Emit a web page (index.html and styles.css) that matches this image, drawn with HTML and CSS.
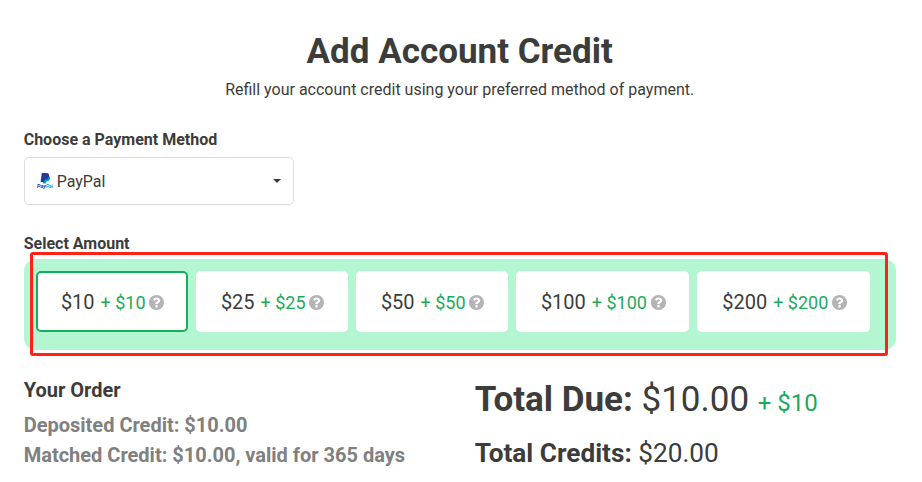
FILE: index.html
```html
<!DOCTYPE html>
<html>
	<head>
		<meta charset="UTF-8">
		<title>Add Account Credit</title>
		<link rel="stylesheet" href="styles.css">
	</head>
	<body>
		<svg class="defs">
			<symbol id="help" viewBox="8 8 496 496">
				<path d="M504 256c0 137-111 248-248 248S8 393 8 256 119 8 256 8s248 111 248 248zM262.700 90c-54.500 0-89.300 23-116.500 63.800-3.500 5.300-2.400 12.400 2.700 16.300l34.700 26.300c5.200 3.900 12.600 3 16.700-2.100 17.900-22.700 30.100-35.800 57.300-35.800 20.400 0 45.700 13.100 45.700 33 0 15-12.400 22.700-32.500 34C247.100 238.500 216 254.900 216 296v4c0 6.600 5.400 12 12 12h56c6.600 0 12-5.400 12-12v-1.300c0-28.500 83.200-29.600 83.200-106.700 0-58-60.200-102-116.500-102zM256 338c-25.400 0-46 20.600-46 46s20.600 46 46 46 46-20.600 46-46-20.600-46-46-46z"/>
			</symbol>
		</svg>
		<div class="page">
			<h1>Add Account Credit</h1>
			<p class="intro">Refill your account credit using your preferred method of payment.</p>

			<div class="label">Choose a Payment Method</div>
			<div class="select">
				<svg class="paypal" viewBox="0 0 16 16">
					<path fill="#009cde" d="M6.500 4.500l5.700-1.500c1.100 1 1 2.600.4 3.800-.6 1.300-1.700 1.700-3.200 1.700L8.700 10.500H6z"/>
					<path fill="#253b96" d="M4.800 0h4.700c2.200 0 3 1.400 2.500 3.400C11.500 5.600 10 6.500 7.600 6.500L6.900 9H3.600z"/>
					<text class="pay" x="0" y="14.500" textLength="9" lengthAdjust="spacingAndGlyphs">Pay</text>
					<text class="pal" x="9" y="14.500" textLength="7" lengthAdjust="spacingAndGlyphs">Pal</text>
				</svg>
				<span class="method">PayPal</span>
				<i class="caret"></i>
			</div>

			<div class="label">Select Amount</div>
			<div class="amounts">
				<div class="amount active">$10 <span class="bonus">+ $10</span><svg class="help"><use href="#help"/></svg></div>
				<div class="amount">$25 <span class="bonus">+ $25</span><svg class="help"><use href="#help"/></svg></div>
				<div class="amount">$50 <span class="bonus">+ $50</span><svg class="help"><use href="#help"/></svg></div>
				<div class="amount">$100 <span class="bonus">+ $100</span><svg class="help"><use href="#help"/></svg></div>
				<div class="amount">$200 <span class="bonus">+ $200</span><svg class="help"><use href="#help"/></svg></div>
				<div class="marker"></div>
			</div>

			<div class="summary">
				<div class="order">
					<h2>Your Order</h2>
					<p>Deposited Credit: $10.00</p>
					<p>Matched Credit: $10.00, valid for 365 days</p>
				</div>
				<div class="totals">
					<div class="due"><b>Total Due:</b> $10.00 <span class="bonus">+ $10</span></div>
					<div class="credits"><b>Total Credits:</b> $20.00</div>
				</div>
			</div>
		</div>
	</body>
</html>
```

FILE: styles.css
```css
*{
	box-sizing: border-box;
}
body{
	margin: 0;
	background: #fff;
	color: #3c3c3b;
	font: 16px/24px Roboto, sans-serif;
}
h1,h2,p{
	margin: 0;
}
.defs{
	display: none;
}
.page{
	width: 872px;
	margin-left: 23.700px;
	padding-top: 31px;
}
h1{
	font-size: 35px;
	line-height: 42px;
	text-align: center;
}
.intro{
	margin: 5px 0 26px;
	text-align: center;
}
.label{
	font-weight: 700;
}
.select{
	display: flex;
	align-items: center;
	width: 270px;
	height: 48px;
	margin: 5px 0 27px;
	padding: 0 12px;
	border: 1px solid #dcdcdc;
	border-radius: 5px;
}
.paypal{
	width: 16px;
	height: 16px;
	margin-right: 4px;
}
.paypal text{
	font: italic 700 5.500px Roboto, sans-serif;
}
.pay{
	fill: #253b96;
}
.pal{
	fill: #009cde;
}
.method{
	padding-top: 2px;
}
.caret{
	margin-left: auto;
	border: 4px solid transparent;
	border-top-color: #3c3c3b;
	border-bottom: 0;
}
.amounts{
	position: relative;
	display: flex;
	gap: 8px;
	height: 91px;
	margin-top: 3px;
	padding: 12px 12px 18px;
	background: #b4f6d2;
	border-radius: 12px;
}
.amount{
	height: 61px;
	padding: 1px 21.500px 0 23.200px;
	border: 2px solid #fff;
	border-radius: 5px;
	background: #fff;
	font-size: 20px;
	line-height: 57px;
	white-space: nowrap;
}
.active{
	border-color: #14ae5c;
}
.bonus{
	color: #1cab5b;
}
.amount .bonus{
	margin-left: 1px;
	font-size: 18px;
}
.help{
	width: 15px;
	height: 15px;
	margin-left: 3.600px;
	fill: #b4b4b4;
	vertical-align: -1px;
}
/* frame drawn over the amount row */
.marker{
	position: absolute;
	top: -7px;
	left: 6.300px;
	width: 858px;
	height: 104px;
	border: 3px solid #ff2314;
	border-radius: 3px;
}
.summary{
	display: grid;
	grid-template-columns: 451px 1fr;
	margin-top: 25px;
}
.order{
	color: #808080;
	font-size: 20px;
	font-weight: 700;
	line-height: 30px;
}
.order h2{
	margin-bottom: 5px;
	color: #3c3c3b;
	font-size: 20px;
}
.due{
	padding-top: 1px;
	font-size: 35px;
	line-height: 48px;
}
.due .bonus{
	font-size: 24px;
}
.credits{
	margin-top: 6px;
	font-size: 26.200px;
	line-height: 40px;
}
```
